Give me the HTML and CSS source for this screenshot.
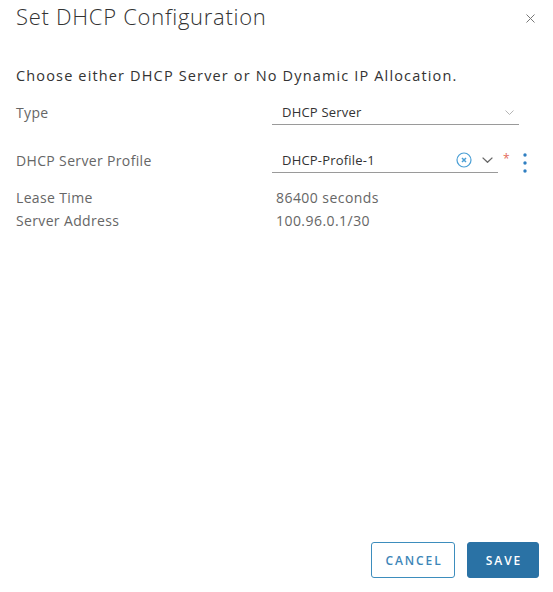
FILE: index.html
```html
<!DOCTYPE html>
<html>
<head>
<meta charset="utf-8">
<link rel="stylesheet" href="styles.css">
</head>
<body>
<div class="modal">
  <div class="header">
    <h1 class="title">Set DHCP Configuration</h1>
    <svg class="close" width="9" height="9" viewBox="0 0 9 9"><path d="M0.5 0.5 L8.5 8.5 M8.5 0.5 L0.5 8.5" stroke="#777" stroke-width="1"/></svg>
  </div>
  <div class="body">
    <p class="intro">Choose either DHCP Server or No Dynamic IP Allocation.</p>
    <div class="row row-type">
      <div class="label">Type</div>
      <div class="control select">
        <span class="value">DHCP Server</span>
        <svg class="chev-light" width="9" height="5" viewBox="0 0 9 5"><path d="M0.5 0.5 L4.5 4.5 L8.5 0.5" fill="none" stroke="#b5b5b5" stroke-width="1"/></svg>
      </div>
    </div>
    <div class="row row-profile">
      <div class="label">DHCP Server Profile</div>
      <div class="control combo">
        <span class="value">DHCP-Profile-1</span>
        <svg class="clear" width="16" height="16" viewBox="0 0 16 16"><circle cx="8" cy="8" r="7" fill="none" stroke="#4a9fd5" stroke-width="1.2"/><path d="M6 6 L10 10 M10 6 L6 10" stroke="#4a9fd5" stroke-width="1.5"/></svg>
        <svg class="chev" width="11" height="6" viewBox="0 0 11 6"><path d="M0.6 0.6 L5.5 5.3 L10.4 0.6" fill="none" stroke="#666" stroke-width="1.3"/></svg>
      </div>
      <span class="req">*</span>
      <svg class="dots" width="4" height="20" viewBox="0 0 4 20"><circle cx="2" cy="2" r="1.7" fill="#2f7fc1"/><circle cx="2" cy="10" r="1.7" fill="#2f7fc1"/><circle cx="2" cy="18" r="1.7" fill="#2f7fc1"/></svg>
    </div>
    <div class="row info first">
      <div class="label">Lease Time</div>
      <div class="text">86400 seconds</div>
    </div>
    <div class="row info">
      <div class="label">Server Address</div>
      <div class="text">100.96.0.1/30</div>
    </div>
  </div>
  <div class="footer">
    <button class="btn outline">CANCEL</button>
    <button class="btn primary">SAVE</button>
  </div>
</div>
</body>
</html>
```

FILE: styles.css
```css
html, body {
  margin: 0;
  padding: 0;
  background: #fff;
}
body {
  font-family: "Open Sans", "Lato", sans-serif;
  color: #333;
}
.modal {
  width: 553px;
  height: 592px;
  box-sizing: border-box;
  padding: 0 15px 0 16px;
  display: flex;
  flex-direction: column;
}
.header {
  display: flex;
  align-items: flex-start;
  justify-content: space-between;
  height: 40px;
}
.title {
  margin: 1px 0 0 0;
  font-size: 22px;
  line-height: 30px;
  font-weight: 300;
  color: #333;
  letter-spacing: 0.72px;
}
.close {
  margin: 14px 3px 0 0;
}
.body {
  flex: 1;
}
.intro {
  margin: 26px 0 0 0;
  font-size: 14.5px;
  letter-spacing: 1.15px;
  color: #333;
  line-height: 20px;
}
.row {
  display: flex;
  align-items: flex-end;
}
.label {
  width: 256px;
  font-size: 14px;
  color: #666;
  letter-spacing: 0.35px;
  line-height: 18px;
  padding-bottom: 3px;
}
.row-type {
  margin-top: 14px;
}
.control {
  display: flex;
  align-items: center;
  box-sizing: border-box;
  height: 25px;
  border-bottom: 1px solid #9a9a9a;
  padding-left: 10px;
  font-size: 13px;
  letter-spacing: 0.2px;
  color: #333;
}
.control .value {
  flex: 1;
}
.select {
  width: 247px;
  padding-right: 5px;
}
.row-profile {
  margin-top: 22px;
}
.combo {
  width: 226px;
  padding-right: 5px;
}
.clear {
  margin-right: 10px;
}
.req {
  color: #e46a5a;
  font-size: 12px;
  line-height: 12px;
  align-self: flex-start;
  margin: 6px 0 0 5px;
}
.dots {
  align-self: flex-start;
  margin-left: 13px;
  margin-top: 6px;
}
.info {
  font-size: 14px;
  color: #666;
  line-height: 23px;
}
.info .label {
  width: 260px;
  line-height: 23px;
  padding-bottom: 0;
}
.info.first {
  margin-top: 13px;
}
.text {
  font-size: 14px;
  color: #666;
  letter-spacing: 0.45px;
}
.footer {
  display: flex;
  justify-content: flex-end;
  gap: 12px;
  padding: 0 0 14px 0;
}
.btn {
  height: 36px;
  box-sizing: border-box;
  border-radius: 3px;
  font-family: "Open Sans", sans-serif;
  font-size: 12px;
  font-weight: 600;
  letter-spacing: 1.9px;
  padding: 0 0 0 2px;
  cursor: pointer;
}
.outline {
  width: 84px;
  background: #fff;
  border: 1px solid #3d8dbd;
  color: #3d86b8;
}
.primary {
  width: 72px;
  background: #2a72a5;
  border: 1px solid #2a72a5;
  color: #fff;
  margin-right: -1px;
}
```
